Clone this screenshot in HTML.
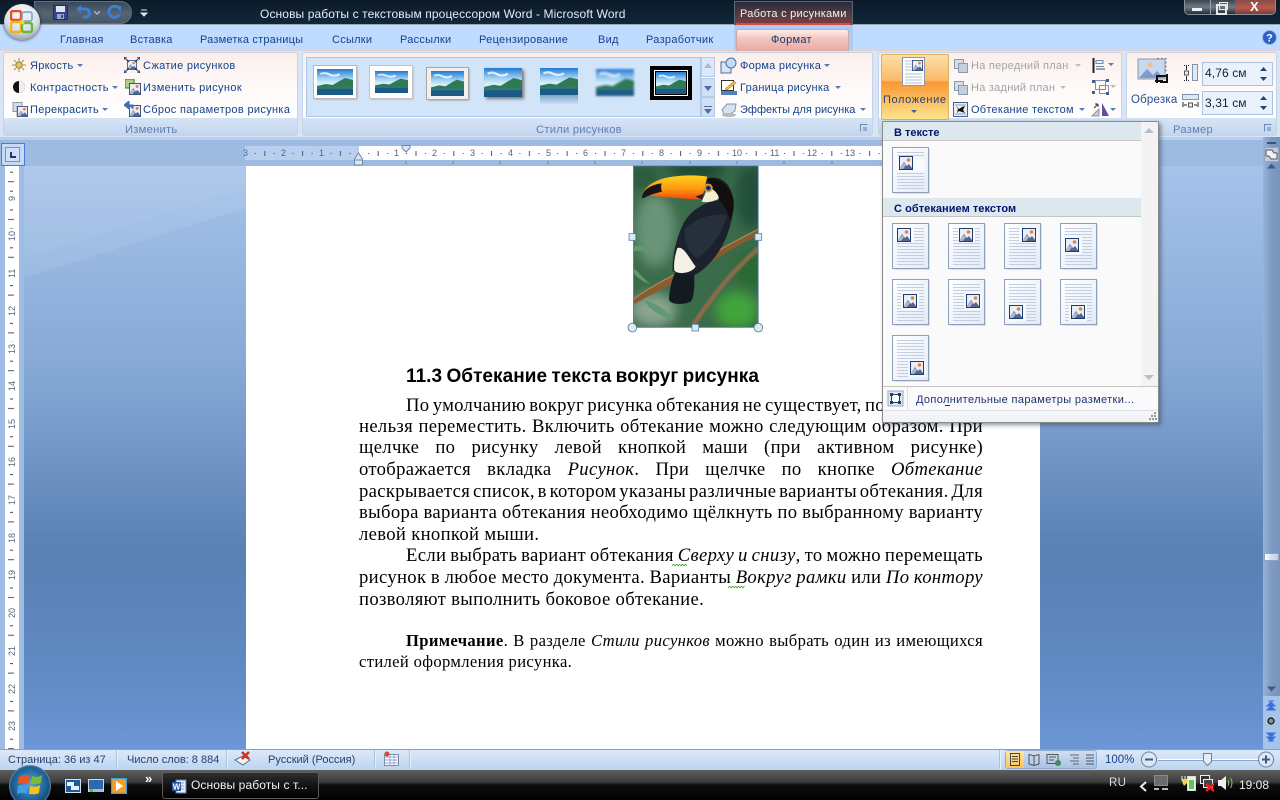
<!DOCTYPE html>
<html lang="ru"><head><meta charset="utf-8"><title>Word</title>
<style>
html,body{margin:0;padding:0;width:1280px;height:800px;overflow:hidden;background:#9dbbe3}
body{position:relative;font-family:"Liberation Sans",sans-serif}
div,span.a,svg.a{position:absolute}
.a{position:absolute}
.t{position:absolute;white-space:nowrap;font-size:11px;line-height:14px;color:#15428b;letter-spacing:.3px;margin-top:1px}
.g{color:#a0a4aa}
.l{color:#5f7fb3;font-size:11.2px;letter-spacing:.25px}
.arr{position:absolute;width:0;height:0;border-left:3px solid transparent;border-right:3px solid transparent;border-top:3px solid #567db1}
.grp{position:absolute;top:52px;height:84px;border:1px solid #c5d3e6;border-radius:3px;background:linear-gradient(#fbeeea 0,#fdf7f5 30%,#fff 78%);box-sizing:border-box;overflow:hidden}
.strip{position:absolute;left:0;right:0;bottom:0;height:17px;background:linear-gradient(#d6e4f5,#c4d6ee)}
.body{position:absolute;left:359px;width:624px;height:24px;overflow:hidden;font:18.67px/24px "Liberation Serif",serif;color:#000;text-align:justify;text-align-last:justify;word-spacing:-4.4px;letter-spacing:.33px}
.note{font-size:16.6px;word-spacing:-4px;letter-spacing:.35px}
.tk{font-size:9px;color:#53647c;line-height:10px;white-space:nowrap;letter-spacing:0}
.ic{position:absolute}
.st{position:absolute;white-space:nowrap;font-size:11px;line-height:14px;color:#27416e;letter-spacing:0;margin-top:1px}
.sep{position:absolute;top:750px;width:1px;height:19px;background:#a9c2e2;box-shadow:1px 0 0 #e8f1fb}
</style></head><body>
<svg width="0" height="0" style="position:absolute">
<defs>
<linearGradient id="sky" x1="0" y1="0" x2="0" y2="1"><stop offset="0" stop-color="#1f78d6"/><stop offset=".35" stop-color="#9fd0f2"/><stop offset=".55" stop-color="#d8eefa"/></linearGradient>
<linearGradient id="pgbg" x1="0" y1="0" x2="1" y2="1"><stop offset="0" stop-color="#fff"/><stop offset="1" stop-color="#e3ebf7"/></linearGradient>
<linearGradient id="beak" x1="0" y1="0" x2="0" y2="1"><stop offset="0" stop-color="#ffd21e"/><stop offset=".55" stop-color="#ff9a10"/><stop offset="1" stop-color="#f04a10"/></linearGradient>
<filter id="b6" x="-50%" y="-50%" width="200%" height="200%"><feGaussianBlur stdDeviation="18"/></filter>
<filter id="b2"><feGaussianBlur stdDeviation="2.2"/></filter>
<filter id="b1"><feGaussianBlur stdDeviation="1"/></filter>
<symbol id="land" viewBox="0 0 32 26" preserveAspectRatio="none">
<rect width="32" height="26" fill="url(#sky)"/>
<path d="M0 17 8 15 14 16 20 12 25 9 32 11V20H0Z" fill="#2f7a55"/>
<path d="M0 18H32V26H0Z" fill="#1c5a86"/><path d="M0 18H32V20H0Z" fill="#3e8f6e" opacity=".6"/>
<path d="M3 5c4-2 7 0 9 1s6 1 8-1" stroke="#fff" stroke-width="2" fill="none" opacity=".8"/>
</symbol>
<symbol id="pic" viewBox="0 0 14 14">
<rect x=".5" y=".5" width="13" height="13" fill="#e9eff8" stroke="#1d3b70"/>
<path d="M1 12 5 6 8 10 10 8 13 12V13H1Z" fill="#55678e"/>
<path d="M1 12 5 7 7 9 4 13H1Z" fill="#aeb9d0"/>
<circle cx="9.5" cy="4" r="1.8" fill="#ef7f32"/>
</symbol>
<symbol id="pg" viewBox="0 0 40 48">
<rect x="2" y="2" width="36" height="45" fill="#d0d6de" opacity=".7"/>
<rect x=".5" y=".5" width="36" height="45" fill="url(#pgbg)" stroke="#8f9fbb"/>
<path d="M5 5.5h27M5 8.5h27M5 11.5h27M5 14.5h27M5 17.5h27M5 20.5h27M5 23.5h27M5 26.5h27M5 29.5h27M5 32.5h27M5 35.5h27M5 38.5h27M5 41.5h27" stroke="#c3cee4" stroke-width="1" fill="none"/>
</symbol>
<symbol id="lay" viewBox="0 0 16 16">
<rect x="1.5" y="1.5" width="9" height="9" fill="#d7dee8" stroke="#8c9aae"/>
<rect x="5.5" y="5.5" width="9" height="9" fill="#c3cfdd" stroke="#8c9aae"/>
</symbol>
</defs>
</svg>

<!-- title bar -->
<div style="left:0;top:0;width:1280px;height:24px;background:linear-gradient(#0c1a2a,#10273a)"></div>
<div style="left:0;top:24px;width:1280px;height:1px;background:#9aa6b2"></div>
<div style="left:34px;top:1px;width:98px;height:23px;border-radius:0 12px 12px 0;background:linear-gradient(#39485a,#566472 55%,#46566a);border:1px solid #5f6e7e;box-sizing:border-box"></div>
<svg class="a" style="left:53px;top:5px" width="15" height="15" viewBox="0 0 15 15"><rect x=".5" y=".5" width="14" height="14" rx="1" fill="#38448c" stroke="#1e2a66"/><rect x="3" y="1" width="9" height="6" fill="#dfe4f2"/><rect x="4" y="9" width="7" height="5" fill="#9aa7c8"/><rect x="8" y="10" width="2" height="3" fill="#38448c"/></svg>
<svg class="a" style="left:75px;top:5px" width="16" height="15" viewBox="0 0 16 15"><path d="M3 4h7a4 4 0 0 1 1 8H8" stroke="#3f7fd0" stroke-width="3" fill="none"/><path d="M6 0V8L1 4Z" fill="#3f7fd0"/></svg>
<svg class="a" style="left:94px;top:11px" width="6" height="4"><path d="M0 0 3 3 6 0" stroke="#c8d2de" fill="none"/></svg>
<svg class="a" style="left:107px;top:5px" width="15" height="15" viewBox="0 0 15 15"><path d="M11 2.500A5.500 5.500 0 1 0 12.500 9" stroke="#3f7fd0" stroke-width="3" fill="none"/><path d="M8 1H14V7Z" fill="#3f7fd0"/></svg>
<svg class="a" style="left:140px;top:9px" width="8" height="8"><path d="M1 1H7M1 4 4 7 7 4Z" stroke="#d8e2ec" fill="#d8e2ec"/></svg>
<!-- office orb -->
<div style="left:4px;top:4px;width:36px;height:36px;border-radius:50%;background:radial-gradient(circle at 50% 30%,#fff,#d6dee6 55%,#8e9aa8 85%,#c8d2dc);box-shadow:0 0 3px #222;z-index:3"></div>
<svg class="a" style="left:10px;top:10px;z-index:4" width="24" height="24" viewBox="0 0 24 24"><rect x="1" y="1" width="10" height="9" rx="2" fill="none" stroke="#e4521b" stroke-width="2.400"/><rect x="12" y="2" width="10" height="9" rx="2" fill="#e6edf4" stroke="#7a9fc4" stroke-width="1.500"/><rect x="1" y="12" width="10" height="10" rx="2" fill="none" stroke="#f3b21c" stroke-width="2.400"/><rect x="12" y="13" width="10" height="9" rx="2" fill="none" stroke="#6fb33c" stroke-width="2.400"/><circle cx="12" cy="12" r="2.500" fill="#f7d24a"/></svg>
<div class="t" style="left:260px;top:6px;color:#e8edf2;font-size:12px;letter-spacing:.11px">Основы работы с текстовым процессором Word - Microsoft Word</div>
<!-- context tab header -->
<div style="left:734px;top:25px;width:119px;height:25px;background:#a9cbf5"></div>
<div style="left:734px;top:1px;width:119px;height:24px;background:linear-gradient(#2a2c3c,#5a3d44 60%,#7c3e3f);border:1px solid #5b6773;border-bottom:0;box-sizing:border-box"></div>
<div style="left:736px;top:23px;width:115px;height:2px;background:#e0463c"></div>
<div class="t" style="left:740px;top:6px;color:#f3f3f3;letter-spacing:.25px">Работа с рисунками</div>
<!-- window controls -->
<div style="left:1184px;top:-1px;width:92px;height:16px;border:1px solid #86909a;border-radius:0 0 5px 5px;box-sizing:border-box;background:linear-gradient(#3a4652,#6e7a84 50%,#232c36);overflow:hidden">
<div style="left:50px;top:0;width:42px;height:16px;background:linear-gradient(#8a4b45,#b45a50 50%,#6d2f2c)"></div>
<div style="left:25px;top:0;width:1px;height:16px;background:#9aa4ae"></div></div>
<div style="left:1192px;top:8px;width:10px;height:3px;background:#f0f0f0"></div>
<div style="left:1216px;top:4px;width:7px;height:7px;border:2px solid #e8e8e8"></div>
<div style="left:1219px;top:2px;width:7px;height:6px;border:1px solid #e8e8e8"></div>
<div class="t" style="left:1250px;top:-1px;color:#fff;font-weight:bold;font-size:13px">X</div>

<!-- tabs row -->
<div style="left:0;top:25px;width:734px;height:112px;background:#bfdbff"></div>
<div style="left:853px;top:25px;width:427px;height:112px;background:#bfdbff"></div>
<div style="left:0;top:50px;width:1280px;height:87px;background:#d7e5f7;border-top:1px solid #e7cfc9;box-sizing:border-box"></div>
<div class="t" style="left:60px;top:32px;letter-spacing:.25px">Главная</div>
<div class="t" style="left:130px;top:32px;letter-spacing:.25px">Вставка</div>
<div class="t" style="left:200px;top:32px;letter-spacing:.2px">Разметка страницы</div>
<div class="t" style="left:332px;top:32px;letter-spacing:.25px">Ссылки</div>
<div class="t" style="left:400px;top:32px;letter-spacing:.25px">Рассылки</div>
<div class="t" style="left:479px;top:32px;letter-spacing:.3px">Рецензирование</div>
<div class="t" style="left:598px;top:32px;letter-spacing:.25px">Вид</div>
<div class="t" style="left:646px;top:32px;letter-spacing:.3px">Разработчик</div>
<div style="left:736px;top:29px;width:113px;height:22px;background:linear-gradient(#fdeeea,#f3c6c0 40%,#e9a9a3);border:1px solid #cfa8a8;border-bottom:0;border-radius:3px 3px 0 0;box-sizing:border-box"></div>
<div class="t" style="left:771px;top:32px;color:#17386f;letter-spacing:.3px">Формат</div>
<svg class="a" style="left:1262px;top:30px" width="15" height="15" viewBox="0 0 15 15"><circle cx="7.500" cy="7.500" r="7" fill="#2a62c4" stroke="#9db9e3"/><text x="7.500" y="11.500" font-family="Liberation Sans" font-size="11" font-weight="bold" fill="#fff" text-anchor="middle">?</text></svg>

<!-- groups -->
<div class="grp" style="left:3px;width:295px"><div class="strip"></div></div>
<div class="grp" style="left:302px;width:571px"><div class="strip"></div></div>
<div class="grp" style="left:878px;width:244px"><div class="strip"></div></div>
<div class="grp" style="left:1126px;width:151px"><div class="strip"></div></div>
<div class="t l" style="left:125px;top:122px">Изменить</div>
<div class="t l" style="left:536px;top:122px">Стили рисунков</div>
<div class="t l" style="left:1173px;top:122px">Размер</div>
<svg class="a" style="left:860px;top:124px" width="8" height="8"><path d="M.5 7.500V.5H7.500" stroke="#6c8cb8" fill="none"/><rect x="3" y="3" width="4" height="4" fill="#95aecf"/></svg>
<svg class="a" style="left:1264px;top:124px" width="8" height="8"><path d="M.5 7.500V.5H7.500" stroke="#6c8cb8" fill="none"/><rect x="3" y="3" width="4" height="4" fill="#95aecf"/></svg>

<!-- group 1 -->
<svg class="a" style="left:12px;top:58px" width="14" height="14" viewBox="0 0 14 14"><circle cx="7" cy="7" r="3.200" fill="#e7c65a" stroke="#8f7a3c"/><path d="M7 0v3M7 11v3M0 7h3M11 7h3M2 2l2 2M10 10l2 2M12 2l-2 2M2 12l2-2" stroke="#a58f4b"/></svg>
<div class="t" style="left:30px;top:58px">Яркость</div><div class="arr" style="left:77px;top:64px"></div>
<svg class="a" style="left:12px;top:80px" width="14" height="14" viewBox="0 0 14 14"><circle cx="7" cy="7" r="6" fill="#111"/><path d="M7 1a6 6 0 0 1 0 12Z" fill="#eee"/></svg>
<div class="t" style="left:30px;top:80px">Контрастность</div><div class="arr" style="left:112px;top:86px"></div>
<svg class="a" style="left:11px;top:101px" width="17" height="16"><use href="#lay"/><use href="#pic" x="6" y="5" width="11" height="11"/></svg>
<div class="t" style="left:30px;top:102px">Перекрасить</div><div class="arr" style="left:102px;top:108px"></div>
<svg class="a" style="left:124px;top:57px" width="16" height="16" viewBox="0 0 16 16"><use href="#pic" x="3" y="3" width="10" height="10"/><path d="M0 0 5 5M16 0 11 5M0 16 5 11M16 16 11 11M0 3V0H3M13 0H16V3M0 13V16H3M16 13V16H13" stroke="#1c3566" fill="none"/></svg>
<div class="t" style="left:143px;top:58px">Сжатие рисунков</div>
<svg class="a" style="left:125px;top:79px" width="16" height="16" viewBox="0 0 16 16"><rect x="0" y="0" width="9" height="9" fill="#a9d38b" stroke="#41702c"/><use href="#pic" x="4" y="4" width="12" height="12"/></svg>
<div class="t" style="left:143px;top:80px;letter-spacing:.38px">Изменить рисунок</div>
<svg class="a" style="left:124px;top:101px" width="17" height="16" viewBox="0 0 17 16"><use href="#pic" x="5" y="4" width="12" height="12"/><path d="M0 4 5 0V8ZM4 4H9V8" fill="#3a6bb3" stroke="#3a6bb3"/></svg>
<div class="t" style="left:143px;top:102px;letter-spacing:.33px">Сброс параметров рисунка</div>

<!-- gallery -->
<div style="left:306px;top:57px;width:395px;height:60px;background:#d2e4f8;border:1px solid #a9c5e8;box-sizing:border-box"></div>
<div style="left:701px;top:57px;width:14px;height:20px;background:#dce8f7;border:1px solid #b5cbe8;box-sizing:border-box"></div>
<div style="left:701px;top:78px;width:14px;height:19px;background:#cfe0f5;border:1px solid #b5cbe8;box-sizing:border-box"></div>
<div style="left:701px;top:97px;width:14px;height:20px;background:#cfe0f5;border:1px solid #b5cbe8;box-sizing:border-box"></div>
<svg class="a" style="left:701px;top:57px" width="14" height="60"><path d="M3 11 7 6 11 11Z" fill="#aebacb"/><path d="M3 29H11L7 34Z" fill="#4f6f9f"/><path d="M3 49H11V50H3ZM3 52H11L7 57Z" fill="#4f6f9f"/></svg>
<!-- thumbs -->
<div style="left:314px;top:66px;width:42px;height:32px;background:#fff;box-shadow:0 0 0 1px #b9b9b9,1px 1px 2px #888"></div>
<svg class="a" style="left:317px;top:69px" width="36" height="26"><use href="#land" width="36" height="26"/></svg>
<div style="left:370px;top:66px;width:42px;height:32px;background:#fff;box-shadow:0 0 0 1px #c4c4c4,1px 1px 2px #999"></div>
<svg class="a" style="left:375px;top:71px" width="33" height="22"><use href="#land" width="33" height="22"/></svg>
<div style="left:427px;top:68px;width:41px;height:31px;background:#f2f0ec;box-shadow:0 0 0 1px #a8a8a8,1px 1px 2px #777"></div>
<svg class="a" style="left:431px;top:71px" width="33" height="25"><use href="#land" width="33" height="25"/></svg>
<div style="left:484px;top:68px;width:38px;height:29px;box-shadow:2px 2px 3px #777"></div>
<svg class="a" style="left:484px;top:68px" width="38" height="29"><use href="#land" width="38" height="29"/></svg>
<svg class="a" style="left:540px;top:68px" width="38" height="27"><rect width="38" height="27" rx="4" fill="#1c5a86"/><use href="#land" width="38" height="27"/></svg>
<div style="left:540px;top:95px;width:38px;height:10px;background:linear-gradient(#5a92b8,#d2e4f8);opacity:.75"></div>
<svg class="a" style="left:593px;top:66px" width="44" height="33"><g filter="url(#b1)"><use href="#land" x="3" y="3" width="38" height="27"/></g></svg>
<div style="left:650px;top:66px;width:42px;height:34px;background:#000"></div>
<div style="left:654px;top:70px;width:34px;height:26px;background:#fff"></div>
<div style="left:655px;top:71px;width:32px;height:24px;background:#000"></div>
<svg class="a" style="left:656px;top:72px" width="30" height="22"><use href="#land" width="30" height="22"/></svg>
<!-- picture style buttons -->
<svg class="a" style="left:720px;top:57px" width="17" height="17" viewBox="0 0 17 17"><rect x="1" y="5" width="10" height="11" fill="#d7e4f4" stroke="#4a6f9f"/><circle cx="11" cy="6" r="5" fill="#c8dbf2" stroke="#4a6f9f"/></svg>
<div class="t" style="left:740px;top:58px;letter-spacing:.25px">Форма рисунка</div><div class="arr" style="left:824px;top:64px"></div>
<svg class="a" style="left:721px;top:80px" width="16" height="15" viewBox="0 0 16 15"><rect x=".5" y=".5" width="12" height="10" fill="#fff" stroke="#333"/><path d="M4 9 13 1 15 3 6 10Z" fill="#e6b94a" stroke="#8a6a25" stroke-width=".5"/><rect y="11" width="16" height="4" fill="#4f81bd"/></svg>
<div class="t" style="left:740px;top:80px;letter-spacing:.25px">Граница рисунка</div><div class="arr" style="left:835px;top:86px"></div>
<svg class="a" style="left:721px;top:102px" width="16" height="15" viewBox="0 0 16 15"><path d="M1 8 6 2H15L14 9 9 12H3Z" fill="#d5e2f2" stroke="#7e97b8"/><ellipse cx="8" cy="13" rx="7" ry="2" fill="#b9b9b9"/></svg>
<div class="t" style="left:740px;top:102px;letter-spacing:0">Эффекты для рисунка</div><div class="arr" style="left:860px;top:108px"></div>

<!-- group 3 -->
<div style="left:881px;top:54px;width:68px;height:66px;border:1px solid #d9b162;border-radius:2px;box-sizing:border-box;background:linear-gradient(#fddfa9 0,#fbb969 40%,#f99733 42%,#fbbd60 70%,#fde48f 100%)"></div>
<svg class="a" style="left:902px;top:57px" width="24" height="30" viewBox="0 0 24 30"><rect x=".5" y=".5" width="22" height="28" fill="#fff" stroke="#8b97ad"/><path d="M3 4h8M3 7h8M3 10h8M3 13h8M3 17h17M3 20h17M3 23h17M3 26h17" stroke="#b4bfd3"/><use href="#pic" x="10" y="3" width="11" height="11"/></svg>
<div class="t" style="left:883px;top:92px;color:#24427a;letter-spacing:.6px">Положение</div><div class="arr" style="left:911px;top:110px;border-top-color:#3d5d91"></div>
<svg class="a" style="left:953px;top:58px" width="16" height="16"><use href="#lay"/></svg>
<div class="t g" style="left:971px;top:58px;letter-spacing:.25px">На передний план</div><div class="arr" style="left:1075px;top:64px;border-top-color:#b9bdc4"></div>
<svg class="a" style="left:953px;top:80px" width="16" height="16"><use href="#lay"/></svg>
<div class="t g" style="left:971px;top:80px;letter-spacing:.25px">На задний план</div><div class="arr" style="left:1060px;top:86px;border-top-color:#b9bdc4"></div>
<svg class="a" style="left:953px;top:102px" width="15" height="15" viewBox="0 0 15 15"><rect x=".5" y=".5" width="14" height="14" fill="#e8eef7" stroke="#46628f"/><path d="M2 3h11M2 12h11" stroke="#8ba2c4"/><path d="M3 4 6 7 9 5 12 4 10 8 12 11 9 10 6 9 4 11 5 7Z" fill="#111"/></svg>
<div class="t" style="left:971px;top:102px;letter-spacing:.25px">Обтекание текстом</div><div class="arr" style="left:1079px;top:108px"></div>
<svg class="a" style="left:1092px;top:58px" width="22" height="15" viewBox="0 0 22 15"><path d="M1.500 0V15" stroke="#222" stroke-width="2"/><path d="M4 2.500h7v3H4zM4 8.500h8" stroke="#6f8caf" fill="#eef3fa"/><path d="M4 11h9" stroke="#444"/><path d="M16 5h6L19 8Z" fill="#567db1"/></svg>
<svg class="a" style="left:1091px;top:79px" width="25" height="16" viewBox="0 0 25 16"><path d="M4.500 1.500h10v9h-10zM8.500 6.500h9v8h-9z" stroke="#7a94b8" fill="none"/><path d="M1 1h3v3H1zM15 0h3v3h-3zM1 12h3v3H1zM15 13h3v3h-3z" fill="#3f5f8e"/><path d="M19 6h6L22 9Z" fill="#b9bdc4"/></svg>
<svg class="a" style="left:1091px;top:102px" width="25" height="15" viewBox="0 0 25 15"><path d="M1 14 8 7V14Z" fill="#c9cdd4" stroke="#8e939c"/><path d="M11 1V14H18Z" fill="#6b4a9f"/><path d="M3 6 7 2M7 2H4M7 2V5" stroke="#333" fill="none"/><path d="M19 6h6L22 9Z" fill="#567db1"/></svg>

<!-- group 4 -->
<svg class="a" style="left:1137px;top:57px" width="33" height="30" viewBox="0 0 33 30"><rect x="1" y="2" width="27" height="20" fill="#c6d9ef" stroke="#8d99a8"/><path d="M2 21 10 12 16 18 20 14 27 21Z" fill="#7d9dc6"/><circle cx="13" cy="8" r="2.500" fill="#f5bd8b"/><path d="M20 1.500H29V15" stroke="#777" stroke-dasharray="2 2" fill="none"/><path d="M20 26V19H30V25H23M30 17V23" stroke="#111" stroke-width="2" fill="none"/><path d="M18 24h8" stroke="#111" stroke-width="2"/></svg>
<div class="t" style="left:1131px;top:92px;color:#2a4e96;font-size:11.5px;letter-spacing:.2px">Обрезка</div>
<svg class="a" style="left:1183px;top:64px" width="15" height="18" viewBox="0 0 15 18"><rect x="9.500" y=".5" width="5" height="16" fill="#dfe9f5" stroke="#7f94b0"/><rect x="1.500" y="7" width="4" height="4" fill="#eee" stroke="#555"/><path d="M1 1.500h6M1 16.500h6" stroke="#222" stroke-dasharray="1 1"/><path d="M3.500 2v4M3.500 12v4" stroke="#222"/></svg>
<svg class="a" style="left:1182px;top:94px" width="17" height="15" viewBox="0 0 17 15"><rect x=".5" y=".5" width="16" height="5" fill="#dfe9f5" stroke="#7f94b0"/><rect x="6.500" y="9" width="4" height="4" fill="#eee" stroke="#555"/><path d="M1 8v5M16 8v5M2 11h3M12 11h3" stroke="#222"/></svg>
<div style="left:1202px;top:62px;width:71px;height:24px;background:#e8f1fc;border:1px solid #a9c3e6;box-sizing:border-box"></div>
<div style="left:1202px;top:91px;width:71px;height:24px;background:#e8f1fc;border:1px solid #a9c3e6;box-sizing:border-box"></div>
<div class="t" style="left:1205px;top:65px;color:#10203a;font-size:12px;letter-spacing:.1px">4,76 см</div>
<div class="t" style="left:1205px;top:95px;color:#10203a;font-size:12px;letter-spacing:.1px">3,31 см</div>
<svg class="a" style="left:1259px;top:66px" width="9" height="16"><path d="M1 5H8L4.500 1ZM1 11H8L4.500 15Z" fill="#24427a"/></svg>
<svg class="a" style="left:1259px;top:95px" width="9" height="16"><path d="M1 5H8L4.500 1ZM1 11H8L4.500 15Z" fill="#24427a"/></svg>

<!-- document bg -->
<div style="left:0;top:137px;width:1280px;height:29px;background:#9dbae1"></div>
<div style="left:0;top:137px;width:1280px;height:3px;background:#b7cfee"></div>
<div style="left:0;top:166px;width:1280px;height:583px;background:linear-gradient(#a5c3ea 0,#86a8d5 35%,#5a81b4 66%,#5f89c1 85%,#6c96d5 100%)"></div>
<svg class="a" style="left:24px;top:166px" width="222" height="200"><path d="M0 92 222 22V42L0 112Z" fill="#fff" opacity=".08"/><path d="M0 0H222V22L0 92Z" fill="#fff" opacity=".1"/></svg>
<div style="left:0;top:166px;width:24px;height:583px;background:#9dbbe3"></div>
<!-- h ruler -->
<div style="left:245px;top:146px;width:795px;height:14px;background:#fff"></div>
<div style="left:245px;top:146px;width:114px;height:14px;background:#b8d0ee"></div>
<svg class="a" style="left:245px;top:146px" width="795" height="20">
<defs><pattern id="hr" x="0.800" y="0" width="37.800" height="20" patternUnits="userSpaceOnUse"><rect x="9" y="7" width="1" height="1" fill="#444"/><rect x="18.500" y="5" width="1" height="5" fill="#555"/><rect x="28" y="7" width="1" height="1" fill="#444"/></pattern></defs>
<rect width="795" height="14" fill="url(#hr)"/>
<path d="M161 15v3M208 15v3M255 15v3M303 15v3M350 15v3M397 15v3M445 15v3M492 15v3M539 15v3M587 15v3" stroke="#70809a"/>
</svg>
<div class="tk" style="left:243px;top:148px">3</div><div class="tk" style="left:281px;top:148px">2</div><div class="tk" style="left:319px;top:148px">1</div>
<div class="tk" style="left:394px;top:148px">1</div><div class="tk" style="left:432px;top:148px">2</div><div class="tk" style="left:470px;top:148px">3</div><div class="tk" style="left:508px;top:148px">4</div><div class="tk" style="left:546px;top:148px">5</div><div class="tk" style="left:583px;top:148px">6</div><div class="tk" style="left:621px;top:148px">7</div><div class="tk" style="left:659px;top:148px">8</div><div class="tk" style="left:697px;top:148px">9</div><div class="tk" style="left:732px;top:148px">10</div><div class="tk" style="left:770px;top:148px">11</div><div class="tk" style="left:807px;top:148px">12</div><div class="tk" style="left:845px;top:148px">13</div>
<svg class="a" style="left:352px;top:144px" width="60" height="22"><path d="M2.500 15 6.500 9 10.500 15V21H2.500ZM2.500 16H10.500" fill="#dbe6f4" stroke="#6f85a5"/><path d="M50 1.500H58V4L54 8 50 4Z" fill="#dbe6f4" stroke="#6f85a5"/></svg>
<!-- v ruler and corner -->
<div style="left:1px;top:143px;width:24px;height:23px;background:#c4d9f3;border:1px solid #4a7ad4;box-sizing:border-box"></div>
<div style="left:5px;top:147px;width:15px;height:15px;background:#cfe0f6;border:1px solid #7794bd;box-sizing:border-box"></div>
<div style="left:10px;top:152px;width:2px;height:6px;background:#1e3a6e"></div><div style="left:10px;top:156px;width:6px;height:2px;background:#1e3a6e"></div>
<svg class="a" style="left:5px;top:166px" width="14" height="583" font-family="Liberation Sans" font-size="9" fill="#53647c">
<defs><pattern id="vr" x="0" y="-3.300" width="14" height="37.800" patternUnits="userSpaceOnUse"><rect x="5" y="9" width="3" height="1" fill="#444"/><rect x="3" y="18.500" width="6" height="1" fill="#555"/><rect x="5" y="28" width="3" height="1" fill="#444"/></pattern></defs>
<rect width="14" height="583" fill="#fff"/><rect width="14" height="583" fill="url(#vr)"/>
<rect x="1" y="26" width="12" height="11" fill="#fff"/><rect x="1" y="63" width="12" height="13" fill="#fff"/><rect x="1" y="100" width="12" height="13" fill="#fff"/><rect x="1" y="138" width="12" height="13" fill="#fff"/><rect x="1" y="176" width="12" height="13" fill="#fff"/><rect x="1" y="213" width="12" height="13" fill="#fff"/><rect x="1" y="251" width="12" height="13" fill="#fff"/><rect x="1" y="289" width="12" height="13" fill="#fff"/><rect x="1" y="327" width="12" height="13" fill="#fff"/><rect x="1" y="365" width="12" height="13" fill="#fff"/><rect x="1" y="402" width="12" height="13" fill="#fff"/><rect x="1" y="440" width="12" height="13" fill="#fff"/><rect x="1" y="478" width="12" height="13" fill="#fff"/><rect x="1" y="516" width="12" height="13" fill="#fff"/><rect x="1" y="553" width="12" height="13" fill="#fff"/>
<text transform="translate(10 35) rotate(-90)">9</text><text transform="translate(10 75) rotate(-90)">10</text><text transform="translate(10 112) rotate(-90)">11</text><text transform="translate(10 150) rotate(-90)">12</text><text transform="translate(10 188) rotate(-90)">13</text><text transform="translate(10 225) rotate(-90)">14</text><text transform="translate(10 263) rotate(-90)">15</text><text transform="translate(10 301) rotate(-90)">16</text><text transform="translate(10 339) rotate(-90)">17</text><text transform="translate(10 377) rotate(-90)">18</text><text transform="translate(10 414) rotate(-90)">19</text><text transform="translate(10 452) rotate(-90)">20</text><text transform="translate(10 490) rotate(-90)">21</text><text transform="translate(10 528) rotate(-90)">22</text><text transform="translate(10 565) rotate(-90)">23</text>
</svg>
<!-- page -->
<div style="left:246px;top:166px;width:794px;height:583px;background:#fff"></div>

<!-- toucan -->
<svg class="a" style="left:620px;top:160px" width="150" height="180" viewBox="0 0 450 540">
<defs><clipPath id="ci"><rect x="40" y="18" width="375" height="484"/></clipPath></defs>
<g clip-path="url(#ci)">
<rect x="40" y="18" width="375" height="484" fill="#3a6b4a"/>
<g filter="url(#b6)">
<ellipse cx="105" cy="210" rx="60" ry="110" fill="#6a9479"/>
<ellipse cx="395" cy="110" rx="50" ry="100" fill="#24503a"/>
<ellipse cx="350" cy="450" rx="65" ry="55" fill="#3fa63a"/>
<ellipse cx="100" cy="450" rx="70" ry="50" fill="#8ba592"/>
<ellipse cx="230" cy="30" rx="90" ry="25" fill="#1f4530"/>
<ellipse cx="390" cy="330" rx="40" ry="60" fill="#276a30"/>
<ellipse cx="70" cy="50" rx="45" ry="40" fill="#2b5a3c"/>
</g>
<path d="M420 262C350 320 290 390 220 495" stroke="#8b6a48" stroke-width="14" fill="none" filter="url(#b2)"/>
<path d="M40 260C60 250 85 262 100 285 75 272 55 270 40 275ZM42 325C60 340 75 360 90 372 65 365 50 350 42 340ZM70 420C100 425 140 450 165 480 120 470 90 450 70 420Z" fill="#5d9a70" filter="url(#b1)"/>
<path d="M42 418C100 375 160 345 215 318 270 285 340 245 415 212L415 228C350 255 290 295 240 330 170 365 100 400 42 432Z" fill="#8a5a30"/>
<path d="M42 416C100 375 160 345 215 318 270 285 340 245 415 208" stroke="#b08450" stroke-width="4" fill="none"/>
<path d="M165 338 222 332C224 370 224 410 212 425 190 435 155 435 147 420 148 390 155 360 165 338Z" fill="#131a22"/>
<path d="M300 120C250 125 205 155 186 200 168 240 156 290 158 335L224 345C265 325 315 265 332 190 345 150 345 100 320 70 300 50 275 50 258 56L262 100Z" fill="#1b222d"/>
<path d="M262 56C290 48 325 70 340 115 344 140 338 160 330 180 318 140 300 120 285 110Z" fill="#120f0f"/>
<path d="M195 205C235 170 280 160 320 165 310 220 270 270 230 295 200 270 190 240 195 205Z" fill="#262f3c"/>
<path d="M172 264C190 258 202 285 227 320 215 340 175 345 163 332 160 310 165 285 172 264Z" fill="#f3f0e6"/>
<path d="M245 125C255 105 258 90 268 84 285 88 298 108 296 116 280 126 260 128 245 125Z" fill="#f4efd2"/>
<path d="M66 108C72 82 100 62 140 53 180 45 230 44 262 50L252 90 246 118C200 118 130 110 80 106Z" fill="url(#beak)"/>
<path d="M66 114C66 90 92 74 125 70 122 82 124 90 126 95 105 100 85 106 72 114Z" fill="#15151a"/>
<path d="M226 110 252 100 246 119Z" fill="#222"/>
<circle cx="265" cy="84" r="13" fill="#f39a1b"/><circle cx="265" cy="84" r="8" fill="#1c4aa0"/><circle cx="265" cy="84" r="3.500" fill="#0a0a14"/>
</g>
<rect x="40.500" y="18" width="374" height="484" fill="none" stroke="#4f76a6" stroke-width="2.500"/>
<g fill="#d7ecf7" stroke="#5b82ad" stroke-width="2.500"><rect x="27" y="221" width="20" height="20"/><rect x="405" y="221" width="20" height="20"/><rect x="216" y="493" width="20" height="20"/></g>
<g fill="#d9ecf2" stroke="#617a88" stroke-width="2.500"><circle cx="37" cy="503" r="13"/><circle cx="415" cy="503" r="13"/></g>
</svg>

<!-- doc text -->
<div style="position:absolute;left:406px;top:366px;font:bold 19px/22px 'Liberation Sans',sans-serif;color:#000;white-space:nowrap;letter-spacing:.05px;word-spacing:-1px">11.3 Обтекание текста вокруг рисунка</div>
<div class="body" style="left:406px;width:577px;top:394px;text-align-last:left;word-spacing:-1.4px;letter-spacing:.24px;white-space:nowrap">По умолчанию вокруг рисунка обтекания не существует, поэтому его</div>
<div class="body" style="top:415px">нельзя переместить. Включить обтекание можно следующим образом. При</div>
<div class="body" style="top:436px">щелчке по рисунку левой кнопкой маши (при активном рисунке)</div>
<div class="body" style="top:458px">отображается вкладка <i>Рисунок</i>. При щелчке по кнопке <i>Обтекание</i></div>
<div class="body" style="top:480px">раскрывается список, в котором указаны различные варианты обтекания. Для</div>
<div class="body" style="top:501px">выбора варианта обтекания необходимо щёлкнуть по выбранному варианту</div>
<div class="body" style="top:523px;text-align-last:left;word-spacing:0">левой кнопкой мыши.</div>
<div class="body" style="left:406px;width:577px;top:544px">Если выбрать вариант обтекания <i>Сверху и снизу</i>, то можно перемещать</div>
<div class="body" style="top:566px">рисунок в любое место документа. Варианты <i>Вокруг рамки</i> или <i>По контору</i></div>
<div class="body" style="top:588px;text-align-last:left;word-spacing:0">позволяют выполнить боковое обтекание.</div>
<div class="body note" style="left:406px;width:577px;top:629px"><b>Примечание</b>. В разделе <i>Стили рисунков</i> можно выбрать один из имеющихся</div>
<div class="body note" style="top:650px;text-align-last:left;word-spacing:0">стилей оформления рисунка.</div>
<svg class="a" style="left:672px;top:564px" width="16" height="4"><path d="M0 2 1.500 0 3 2 4.500 0 6 2 7.500 0 9 2 10.500 0 12 2 13.500 0 15 2" stroke="#4f9a3a" fill="none" stroke-width=".8"/></svg>
<svg class="a" style="left:728px;top:586px" width="18" height="4"><path d="M0 2 1.500 0 3 2 4.500 0 6 2 7.500 0 9 2 10.500 0 12 2 13.500 0 15 2 16.500 0" stroke="#4f9a3a" fill="none" stroke-width=".8"/></svg>

<!-- scrollbar -->
<div style="left:1263px;top:137px;width:17px;height:612px;background:linear-gradient(90deg,#98b3d8,#7e9ac2 50%,#7593bd)"></div>
<div style="left:1267px;top:142px;width:9px;height:2px;background:#3a5480"></div>
<div style="left:1264px;top:147px;width:15px;height:15px;background:#c0cbdb;border:1px solid #95a4bb;box-sizing:border-box"></div>
<svg class="a" style="left:1265px;top:149px" width="13" height="11"><path d="M1 1h6l2 3h3v6H6L4 7H1Z" fill="#eef2f8" stroke="#555"/></svg>
<svg class="a" style="left:1266px;top:162px" width="11" height="8"><path d="M1 6.500H10L5.500 1.500Z" fill="#3f5a85"/></svg>
<div style="left:1264px;top:553px;width:15px;height:8px;background:linear-gradient(90deg,#fff,#d3deed,#c3d0e2);border:1px solid #8da3c3;box-sizing:border-box"></div>
<svg class="a" style="left:1266px;top:685px" width="11" height="8"><path d="M1 1.500H10L5.500 6.500Z" fill="#3f5a85"/></svg>
<div style="left:1263px;top:696px;width:17px;height:53px;background:#a6c3ea"></div>
<svg class="a" style="left:1265px;top:700px" width="13" height="46"><path d="M3 1H9M2 6 6 2 10 6ZM2 10 6 6 10 10Z" stroke="#3a70da" fill="#3a70da"/><circle cx="6" cy="21" r="3" fill="#8b8f95" stroke="#111" stroke-width="1.200"/><path d="M3 41H9M2 33 6 37 10 33ZM2 37 6 41 10 37Z" stroke="#3a70da" fill="#3a70da"/></svg>

<!-- popup -->
<div style="left:882px;top:121px;width:277px;height:302px;background:#fafafa;border:1px solid #8a8a8a;box-sizing:border-box;box-shadow:2px 2px 4px rgba(50,60,80,.55);border-radius:1px"></div>
<div style="left:883px;top:122px;width:258px;height:19px;background:#dde7ee;border-bottom:1px solid #c5c5c5;box-sizing:border-box"></div>
<div class="t" style="left:894px;top:125px;color:#00156e;font-weight:bold;letter-spacing:0">В тексте</div>
<div style="left:883px;top:198px;width:258px;height:19px;background:#dde7ee;border-bottom:1px solid #c5c5c5;box-sizing:border-box"></div>
<div class="t" style="left:894px;top:201px;color:#00156e;font-weight:bold;letter-spacing:.05px">С обтеканием текстом</div>
<div style="left:1141px;top:122px;width:17px;height:264px;background:#f3f3f3"></div>
<svg class="a" style="left:1143px;top:127px" width="12" height="7"><path d="M1 6H11L6 1Z" fill="#b3bfd1"/></svg>
<svg class="a" style="left:1143px;top:374px" width="12" height="7"><path d="M1 1H11L6 6Z" fill="#b3bfd1"/></svg>
<svg class="a" style="left:892px;top:147px" width="40" height="48"><use href="#pg" width="40" height="48"/><rect x="3" y="11" width="30" height="14" fill="#f7f9fd"/><use href="#pic" x="7" y="9" width="14" height="14"/></svg>
<svg class="a" style="left:892px;top:223px" width="40" height="48"><use href="#pg" width="40" height="48"/><rect x="3" y="3" width="19" height="17" fill="#fafbfd"/><use href="#pic" x="5" y="5" width="14" height="14"/></svg>
<svg class="a" style="left:948px;top:223px" width="40" height="48"><use href="#pg" width="40" height="48"/><rect x="10" y="3" width="17" height="17" fill="#f8fafd"/><use href="#pic" x="11" y="5" width="14" height="14"/></svg>
<svg class="a" style="left:1004px;top:223px" width="40" height="48"><use href="#pg" width="40" height="48"/><rect x="15" y="3" width="19" height="17" fill="#f8fafd"/><use href="#pic" x="18" y="5" width="14" height="14"/></svg>
<svg class="a" style="left:1060px;top:223px" width="40" height="48"><use href="#pg" width="40" height="48"/><rect x="3" y="13" width="19" height="18" fill="#f9fafd"/><use href="#pic" x="5" y="15" width="14" height="14"/></svg>
<svg class="a" style="left:892px;top:279px" width="40" height="48"><use href="#pg" width="40" height="48"/><rect x="9" y="13" width="18" height="18" fill="#f9fafd"/><use href="#pic" x="11" y="15" width="14" height="14"/></svg>
<svg class="a" style="left:948px;top:279px" width="40" height="48"><use href="#pg" width="40" height="48"/><rect x="16" y="13" width="18" height="18" fill="#f7f9fd"/><use href="#pic" x="18" y="15" width="14" height="14"/></svg>
<svg class="a" style="left:1004px;top:279px" width="40" height="48"><use href="#pg" width="40" height="48"/><rect x="3" y="24" width="19" height="18" fill="#f8fafd"/><use href="#pic" x="5" y="26" width="14" height="14"/></svg>
<svg class="a" style="left:1060px;top:279px" width="40" height="48"><use href="#pg" width="40" height="48"/><rect x="9" y="24" width="18" height="18" fill="#f8fafd"/><use href="#pic" x="11" y="26" width="14" height="14"/></svg>
<svg class="a" style="left:892px;top:335px" width="40" height="48"><use href="#pg" width="40" height="48"/><rect x="16" y="24" width="18" height="18" fill="#f4f7fc"/><use href="#pic" x="18" y="26" width="14" height="14"/></svg>
<div style="left:883px;top:386px;width:275px;height:1px;background:#c5c5c5"></div>
<div style="left:907px;top:387px;width:1px;height:23px;background:#dfdfdf"></div>
<div style="left:883px;top:410px;width:275px;height:12px;background:linear-gradient(#f6f8fb,#eef1f5);border-top:1px solid #dde2e8;box-sizing:border-box"></div>
<svg class="a" style="left:887px;top:390px" width="17" height="17"><rect x="1" y="1" width="15" height="15" fill="#dfe7ef" stroke="#9aa9bc"/><path d="M4.500 4.500h8v8h-8z" fill="#fff" stroke="#1f3e78"/><path d="M3 3h3v3H3zM11 3h3v3h-3zM3 11h3v3H3zM11 11h3v3h-3z" fill="#1f3e78"/></svg>
<div class="t" style="left:916px;top:392px;color:#1d3472;letter-spacing:.36px">Дополнительные параметры разметки...</div>
<div style="left:945px;top:405px;width:5px;height:1px;background:#1d3472"></div>
<svg class="a" style="left:1149px;top:412px" width="8" height="8"><path d="M5 0h2v2H5zM2 3h2v2H2zM5 3h2v2H5zM0 6h2v2H0zM3 6h2v2H3zM6 6h2v2H6z" fill="#8e9aad"/></svg>

<!-- status bar -->
<div style="left:0;top:749px;width:1280px;height:21px;background:linear-gradient(#dbe8f8,#cfe0f5 45%,#bdd3ef);border-top:1px solid #7ea3d3;box-sizing:border-box"></div>
<div class="st" style="left:8px;top:752px">Страница: 36 из 47</div><div class="sep" style="left:116px"></div>
<div class="st" style="left:127px;top:752px">Число слов: 8 884</div><div class="sep" style="left:226px"></div>
<svg class="a" style="left:234px;top:750px" width="18" height="17" viewBox="0 0 18 17"><path d="M1 10 9 6 16 10 9 15Z" fill="#f5f5f0" stroke="#53709c"/><path d="M8 2 15 9M15 2 8 9" stroke="#d5301e" stroke-width="2.500"/></svg>
<div class="st" style="left:268px;top:752px">Русский (Россия)</div><div class="sep" style="left:374px"></div>
<svg class="a" style="left:384px;top:751px" width="15" height="15" viewBox="0 0 15 15"><rect x=".5" y="3.500" width="14" height="11" fill="#fff" stroke="#7a8fb0"/><path d="M1 6h13M1 9h13M1 12h13M6 4v10M10 4v10" stroke="#92a8c8"/><circle cx="3" cy="3" r="2.500" fill="#d8463a"/></svg>
<div class="sep" style="left:409px"></div>
<div class="sep" style="left:999px"></div>
<div style="left:1005px;top:750px;width:92px;height:19px;background:linear-gradient(#cfdef2,#a9c3e4);border:1px solid #8dabd3;border-radius:3px;box-sizing:border-box"></div>
<div style="left:1006px;top:751px;width:18px;height:17px;background:linear-gradient(#fde5a8,#fbc35e)"></div>
<svg class="a" style="left:1008px;top:752px" width="86" height="15" fill="none" stroke="#444">
<path d="M2.500 1.500h9v12h-9zM4 4.500h6M4 7h6M4 9.500h6"/>
<path d="M21 2.500 26 4 31 2.500V12L26 13.500 21 12ZM26 4v9" stroke="#555"/>
<path d="M39 2.500h11v9H39zM41 5h7M41 8h5" stroke="#555"/><circle cx="50" cy="11" r="3" fill="#3e8a5b" stroke="none"/>
<path d="M62 3h9M65 6h6M62 9h9M65 12h6" stroke="#666"/>
<path d="M78 3h8M78 6h8M78 9h8M78 12h8" stroke="#555"/>
</svg>
<div class="st" style="left:1105px;top:752px;color:#15428b;font-size:11.5px">100%</div>
<svg class="a" style="left:1140px;top:750px" width="140" height="19"><path d="M18 9.500H120" stroke="#fff"/><path d="M18 10.500H120" stroke="#8aa6cc"/><circle cx="9" cy="9.500" r="7.500" fill="#dce7f5" stroke="#6c7f9b"/><path d="M5 9.500H13" stroke="#44597a" stroke-width="2"/><path d="M63.500 3.500h8v8l-4 4-4-4Z" fill="#e4ecf7" stroke="#6c7f9b"/><circle cx="126" cy="9.500" r="7.500" fill="#dce7f5" stroke="#6c7f9b"/><path d="M122 9.500H130M126 5.500V13.500" stroke="#44597a" stroke-width="2"/></svg>

<!-- taskbar -->
<div style="left:0;top:770px;width:1280px;height:30px;background:linear-gradient(#5e5e5e,#3c3c3c 40%,#0d0d0d 50%,#000)"></div>
<div style="left:9px;top:765px;width:42px;height:35px;overflow:hidden">
<div style="left:0;top:0;width:42px;height:42px;border-radius:50%;background:radial-gradient(circle at 50% 45%,#57a4d6,#1b5e93 55%,#0d2c4e 80%,#6a8aa5);box-shadow:inset 0 0 2px #ddd"></div></div>
<svg class="a" style="left:17px;top:772px" width="27" height="26" viewBox="0 0 27 26"><path d="M2 5C6 2 9 3 13 4L11.500 12C8 11 5 10 1 12Z" fill="#e9552a"/><path d="M15 4C18 5 21 6 25 3L24 11C20 13 17 12 13.500 12Z" fill="#7ab93c"/><path d="M1 14C5 12 8 13 11 14L10 22C7 21 4 20 0 22Z" fill="#3f9fe2"/><path d="M13 14C17 15 20 15 23 13L22 21C18 23 15 22 12 22Z" fill="#f4c221"/></svg>
<svg class="a" style="left:65px;top:779px" width="16" height="14"><rect x=".5" y=".5" width="15" height="13" fill="#1d5a9e" stroke="#cfe0f2"/><rect x="2" y="3" width="7" height="4" fill="#eaf1fa"/><rect x="6" y="7" width="8" height="4" fill="#eaf1fa"/></svg>
<svg class="a" style="left:88px;top:779px" width="16" height="14"><rect x=".5" y=".5" width="15" height="12" fill="#2f69ad" stroke="#c9d6e5"/><rect x="1" y="10" width="14" height="3" fill="#aab9cc"/><rect x="2" y="10" width="3" height="3" fill="#6cb44c"/></svg>
<svg class="a" style="left:111px;top:778px" width="16" height="16"><rect x=".5" y=".5" width="15" height="15" fill="#ff9a1f" stroke="#39a3e0" stroke-width="1.500"/><path d="M5 3 12 8 5 13Z" fill="#fff"/></svg>
<div class="t" style="left:145px;top:771px;color:#fff;font-size:13px;font-weight:bold">»</div>
<div style="left:162px;top:772px;width:157px;height:27px;border:1px solid #5c5c5c;border-radius:3px;box-sizing:border-box;background:linear-gradient(#2e2e2e,#141414 50%,#000)"></div>
<svg class="a" style="left:171px;top:778px" width="16" height="16" viewBox="0 0 16 16"><rect x="5" y="2" width="10" height="13" fill="#e6ecf6" stroke="#5f78a8"/><path d="M7 5h6M7 8h6M7 11h6" stroke="#8ea2c4"/><rect x="1" y="4" width="9" height="9" fill="#2a56a6"/><text x="5.500" y="11.500" font-size="8" font-weight="bold" font-family="Liberation Sans" fill="#fff" text-anchor="middle">W</text></svg>
<div class="t" style="left:191px;top:777px;color:#f2f2f2;font-size:12px;letter-spacing:.1px">Основы работы с т...</div>
<div class="t" style="left:1109px;top:775px;color:#dcdcdc;font-size:11.5px">RU</div>
<svg class="a" style="left:1139px;top:781px" width="9" height="11"><path d="M7 1 2 5.500 7 10" stroke="#eee" stroke-width="2" fill="none"/></svg>
<svg class="a" style="left:1154px;top:775px" width="15" height="16"><rect x=".5" y=".5" width="13" height="10" fill="#6b6b6b" stroke="#8a8a8a"/><path d="M0 13h5v2H0zM8 13h6v2H8z" fill="#b8b8b8"/></svg>
<svg class="a" style="left:1181px;top:775px" width="16" height="17" viewBox="0 0 16 17"><rect x="6.500" y="1.500" width="8" height="14" fill="#e8f2e4" stroke="#ddd"/><rect x="8" y="5" width="5" height="9" fill="#62c15a"/><path d="M1 1v3M4 1v3" stroke="#eee"/><path d="M0 4h6V8L3 11Z" fill="#f2d44a"/></svg>
<svg class="a" style="left:1200px;top:775px" width="15" height="17" viewBox="0 0 15 17"><rect x=".5" y=".5" width="9" height="8" fill="#333" stroke="#eee"/><rect x="3.500" y="4.500" width="9" height="8" fill="#444" stroke="#eee"/><path d="M6 9 14 16M14 9 6 16" stroke="#e81d1d" stroke-width="2.500"/></svg>
<svg class="a" style="left:1218px;top:775px" width="15" height="16" viewBox="0 0 15 16"><path d="M0 5H3L8 1V15L3 11H0Z" fill="#eee"/><path d="M10 5c1 2 1 4 0 6M12.500 3c2 3 2 7 0 10" stroke="#7fc96a" fill="none"/></svg>
<div class="t" style="left:1239px;top:777px;color:#efefef;font-size:12px;letter-spacing:0">19:08</div>
</body></html>
